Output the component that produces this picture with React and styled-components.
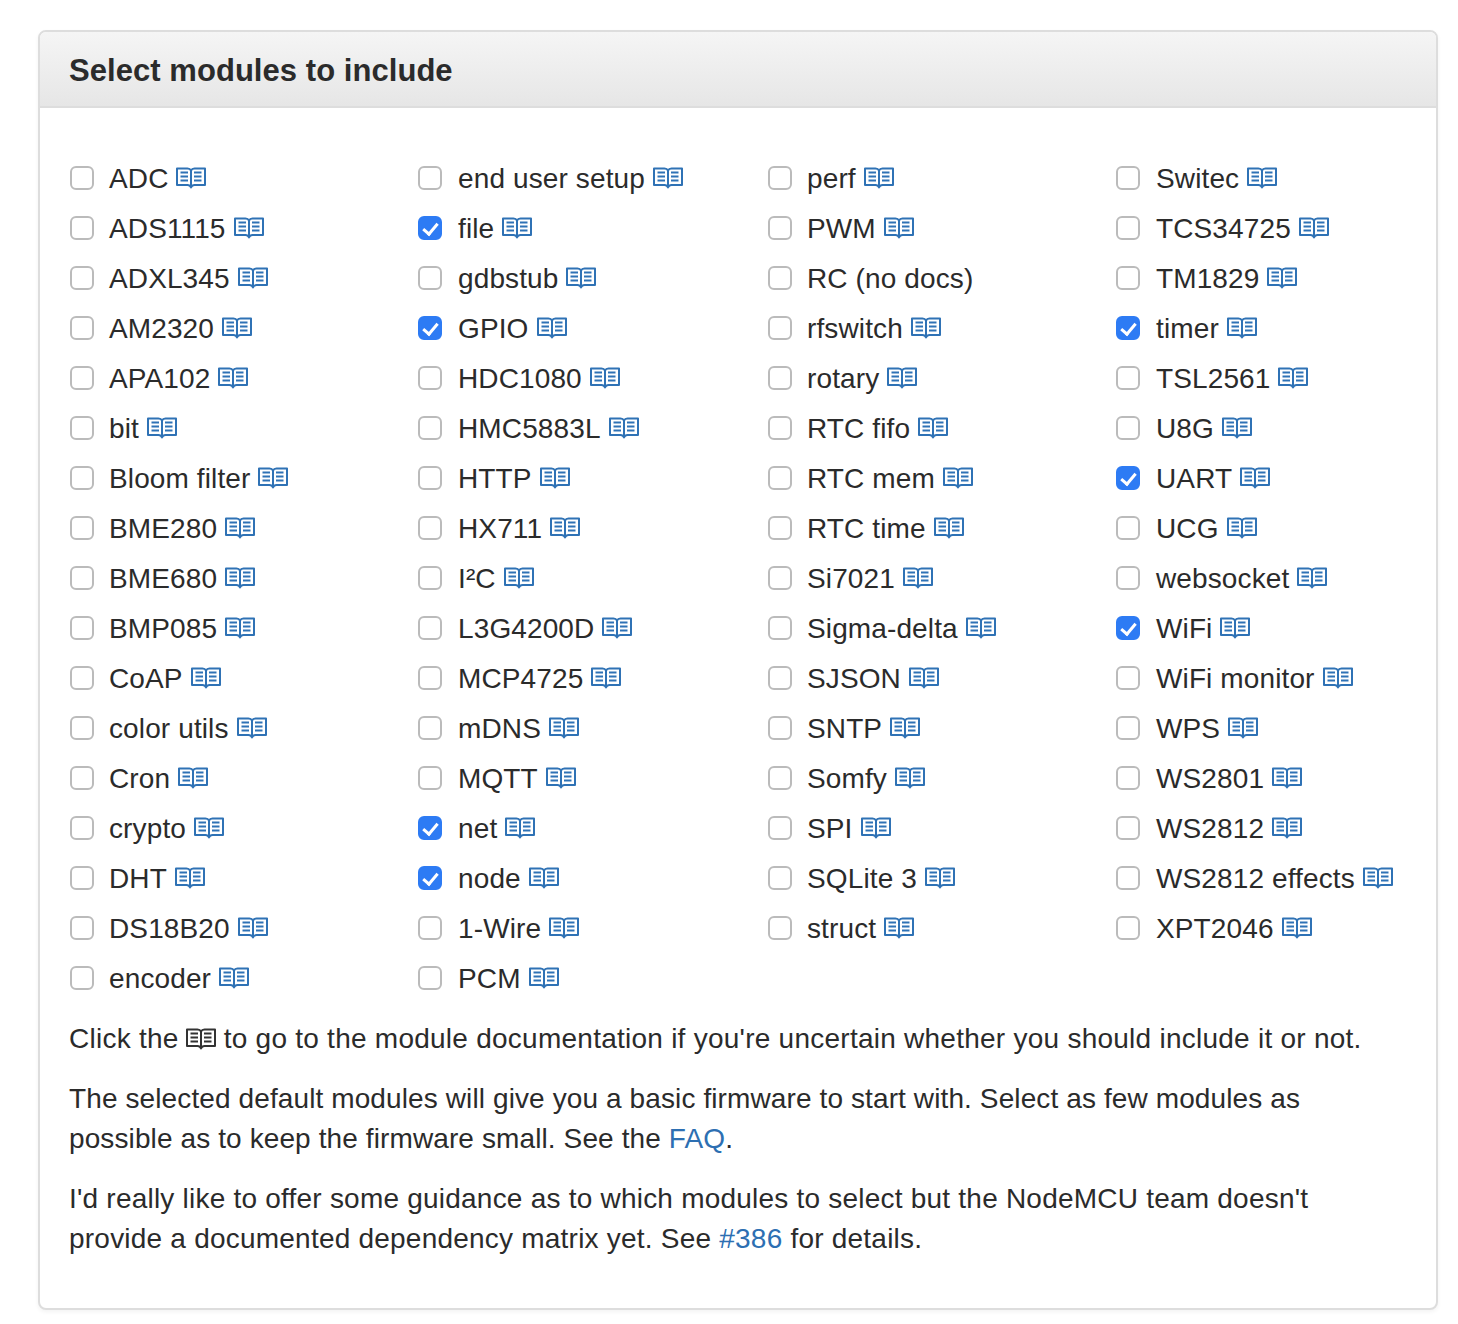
import React from "react"
import styled, { createGlobalStyle } from "styled-components"

const GlobalStyle = createGlobalStyle`
  html, body {
    margin: 0;
    padding: 0;
    background: #fff;
  }
  body {
    font-family: "Liberation Sans", Arial, sans-serif;
    font-size: 28px;
    line-height: 40px;
    color: #2b2b2b;
  }
`

const Page = styled.div`
  padding: 30px 20px 14px 38px;
  width: 1400px;
`
const Panel = styled.section`
  border: 2px solid #ddd;
  border-radius: 8px;
  background: #fff;
  box-shadow: 0 2px 4px rgba(0, 0, 0, 0.05);
  overflow: hidden;
`
const PanelHeading = styled.header`
  height: 70px;
  padding: 4px 30px 0 29px;
  display: flex;
  align-items: center;
  background: linear-gradient(to bottom, #f5f5f5, #e6e6e6);
  border-bottom: 2px solid #ddd;
`
const PanelTitle = styled.h3`
  margin: 0;
  font-size: 31px;
  font-weight: 700;
  line-height: 36px;
  letter-spacing: 0.05px;
  color: #2b2b2b;
`
const PanelBody = styled.div`
  padding: 45px 30px 30px 29px;
`
const Columns = styled.div`
  display: grid;
  grid-template-columns: 349px 349px 349px 1fr;
  margin-bottom: 16px;
`
const Check = styled.input`
  appearance: none;
  box-sizing: border-box;
  flex: none;
  position: relative;
  width: 24px;
  height: 24px;
  margin: 0 15px 0 1px;
  border: 2px solid #bbb;
  border-radius: 6px;
  background: #fff;

  &:checked {
    border-color: #2d7bf4;
    background: #2d7bf4;
  }
  &:checked::after {
    content: "";
    position: absolute;
    left: 6px;
    top: 2px;
    width: 6px;
    height: 12px;
    border: solid #fff;
    border-width: 0 3px 3px 0;
    transform: rotate(40deg);
  }
`
const Column = styled.div`
  display: flex;
  flex-direction: column;

  &:nth-child(even) ${Check} {
    margin: 0 16px 0 0;
  }
`
const Row = styled.label`
  display: flex;
  align-items: center;
  height: 50px;
  white-space: nowrap;
  letter-spacing: 0.12px;
`
const ModuleName = styled.span`
  padding-top: 2px;
`
const DocLink = styled.a`
  display: inline-flex;
  margin-left: 8px;
  color: #2f72b5;
`
const Note = styled.p`
  margin: 0 0 20px;
  letter-spacing: ${(props) => props.$tracking}px;

  &:last-child {
    margin-bottom: 19px;
  }
`
const TextLink = styled.a`
  color: #2d6fb2;
  text-decoration: none;
`
const InlineIcon = styled.span`
  display: inline-flex;
  vertical-align: -2px;
  margin-left: -1px;
  color: #333;
`

const BookIcon = () => (
  <svg width="30" height="22" viewBox="0 0 30 22" fill="none" stroke="currentColor" strokeWidth="2" aria-hidden="true">
    <path d="M1 1.5H11.5Q14 1.5 15 3.5Q16 1.5 18.5 1.5H29V18H18.5Q16 18 15 20.5Q14 18 11.5 18H1Z" strokeLinejoin="round" />
    <path d="M15 3.5V20" />
    <path d="M4.5 5.5H12M4.5 9.5H12M4.5 13.5H12M18 5.5H25.5M18 9.5H25.5M18 13.5H25.5" />
  </svg>
)

const columns = [
  ["ADC", "ADS1115", "ADXL345", "AM2320", "APA102", "bit", "Bloom filter", "BME280", "BME680", "BMP085", "CoAP", "color utils", "Cron", "crypto", "DHT", "DS18B20", "encoder"],
  ["end user setup", "*file", "gdbstub", "*GPIO", "HDC1080", "HMC5883L", "HTTP", "HX711", "I²C", "L3G4200D", "MCP4725", "mDNS", "MQTT", "*net", "*node", "1-Wire", "PCM"],
  ["perf", "PWM", "RC (no docs)", "rfswitch", "rotary", "RTC fifo", "RTC mem", "RTC time", "Si7021", "Sigma-delta", "SJSON", "SNTP", "Somfy", "SPI", "SQLite 3", "struct"],
  ["Switec", "TCS34725", "TM1829", "*timer", "TSL2561", "U8G", "*UART", "UCG", "websocket", "*WiFi", "WiFi monitor", "WPS", "WS2801", "WS2812", "WS2812 effects", "XPT2046"],
]

const Module = ({ entry }) => {
  const checked = entry.startsWith("*")
  const name = checked ? entry.slice(1) : entry
  return (
    <Row>
      <Check type="checkbox" defaultChecked={checked} />
      <ModuleName>{name}</ModuleName>
      {name !== "RC (no docs)" && (
        <DocLink>
          <BookIcon />
        </DocLink>
      )}
    </Row>
  )
}

export default function App() {
  return (
    <Page>
      <GlobalStyle />
      <Panel>
        <PanelHeading>
          <PanelTitle>Select modules to include</PanelTitle>
        </PanelHeading>
        <PanelBody>
          <Columns>
            {columns.map((col) => (
              <Column key={col[0]}>
                {col.map((entry) => (
                  <Module key={entry} entry={entry} />
                ))}
              </Column>
            ))}
          </Columns>
          <Note $tracking={0.25}>
            Click the{" "}
            <InlineIcon>
              <BookIcon />
            </InlineIcon>{" "}
            to go to the module documentation if you're uncertain whether you should include it or not.
          </Note>
          <Note $tracking={0.11}>
            The selected default modules will give you a basic firmware to start with. Select as few modules as
            possible as to keep the firmware small. See the <TextLink>FAQ</TextLink>.
          </Note>
          <Note $tracking={0.22}>
            I'd really like to offer some guidance as to which modules to select but the NodeMCU team doesn't
            provide a documented dependency matrix yet. See <TextLink>#386</TextLink> for details.
          </Note>
        </PanelBody>
      </Panel>
    </Page>
  )
}
